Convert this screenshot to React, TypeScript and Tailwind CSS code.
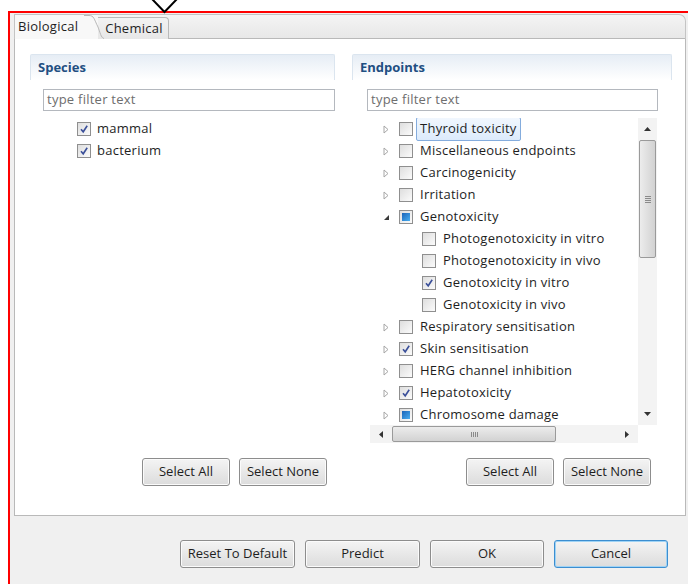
import React from 'react'

type Node = {
  label: string
  state: 'on' | 'off' | 'mixed'
  expander?: 'closed' | 'open'
  child?: boolean
  selected?: boolean
}

const endpoints: Node[] = [
  { label: 'Thyroid toxicity', state: 'off', expander: 'closed', selected: true },
  { label: 'Miscellaneous endpoints', state: 'off', expander: 'closed' },
  { label: 'Carcinogenicity', state: 'off', expander: 'closed' },
  { label: 'Irritation', state: 'off', expander: 'closed' },
  { label: 'Genotoxicity', state: 'mixed', expander: 'open' },
  { label: 'Photogenotoxicity in vitro', state: 'off', child: true },
  { label: 'Photogenotoxicity in vivo', state: 'off', child: true },
  { label: 'Genotoxicity in vitro', state: 'on', child: true },
  { label: 'Genotoxicity in vivo', state: 'off', child: true },
  { label: 'Respiratory sensitisation', state: 'off', expander: 'closed' },
  { label: 'Skin sensitisation', state: 'on', expander: 'closed' },
  { label: 'HERG channel inhibition', state: 'off', expander: 'closed' },
  { label: 'Hepatotoxicity', state: 'on', expander: 'closed' },
  { label: 'Chromosome damage', state: 'mixed', expander: 'closed' },
]

const font = 'font-["Open_Sans","Noto_Sans",sans-serif]'
const label = 'text-[13px] tracking-[0.25px]'

function Check({ state }: { state: Node['state'] }) {
  return (
    <span className="flex h-[14px] w-[14px] shrink-0 items-center justify-center border border-[#8f8f8f] bg-gradient-to-br from-[#dedede] to-[#fbfbfb]">
      {state === 'on' && (
        <svg width="10" height="10" viewBox="0 0 10 10">
          <path d="M2 5.2 L4.2 7.8 L8.2 1.8" fill="none" stroke="#3a4f99" strokeWidth="1.6" />
        </svg>
      )}
      {state === 'mixed' && <span className="h-[8px] w-[8px] bg-gradient-to-br from-[#1b64b8] to-[#4aaef0]" />}
    </span>
  )
}

function Expander({ kind }: { kind?: Node['expander'] }) {
  if (kind === 'open')
    return (
      <svg width="7" height="7" viewBox="0 0 7 7">
        <path d="M6 1 L6 6 L1 6 Z" fill="#3a3a3a" />
      </svg>
    )
  if (kind === 'closed')
    return (
      <svg width="6" height="9" viewBox="0 0 6 9">
        <path d="M1 1 L5 4.5 L1 8 Z" fill="none" stroke="#a6a6a6" strokeWidth="1" />
      </svg>
    )
  return null
}

function Button({ text, w, focus }: { text: string; w: string; focus?: boolean }) {
  return (
    <button
      className={`flex h-[28px] ${w} items-center justify-center rounded-[3px] border bg-gradient-to-b from-[#f4f4f4] to-[#dcdcdc] text-[13px] text-[#1e1e1e] ${
        focus ? 'border-[#3c8ed0] shadow-[inset_0_0_0_1px_#9fd3f5]' : 'border-[#8d8d8d] shadow-[inset_0_0_0_1px_#fbfbfb]'
      }`}
    >
      {text}
    </button>
  )
}

function Header({ title }: { title: string }) {
  return (
    <div className="flex h-[26px] items-center rounded-t-[2px] border border-b-0 border-[#dbe5ef] bg-gradient-to-b from-[#e6edf5] to-white pl-[7px] text-[13px] font-bold text-[#1f4f82]">
      {title}
    </div>
  )
}

function Filter({ w, ml }: { w: string; ml: string }) {
  return (
    <div className={`mt-[9px] ${ml} flex h-[22px] ${w} items-center border border-[#b4b8be] bg-white pl-[3px] ${label} text-[#6e6e6e]`}>
      type filter text
    </div>
  )
}

function VScroll() {
  return (
    <div className="flex w-[19px] flex-col items-center bg-[#f3f3f3]">
      <div className="flex h-[22px] items-center">
        <svg width="7" height="4" viewBox="0 0 7 4"><path d="M0 4 L3.5 0 L7 4 Z" fill="#333" /></svg>
      </div>
      <div className="flex h-[118px] w-[17px] items-center justify-center rounded-[2px] border border-[#9a9a9a] bg-gradient-to-r from-[#ececec] to-[#d2d2d2]">
        <div className="flex flex-col gap-[1px]">
          <span className="h-[1px] w-[6px] bg-[#8a8a8a]" />
          <span className="h-[1px] w-[6px] bg-[#8a8a8a]" />
          <span className="h-[1px] w-[6px] bg-[#8a8a8a]" />
          <span className="h-[1px] w-[6px] bg-[#8a8a8a]" />
        </div>
      </div>
      <div className="flex-1" />
      <div className="flex h-[22px] items-center">
        <svg width="7" height="4" viewBox="0 0 7 4"><path d="M0 0 L7 0 L3.5 4 Z" fill="#333" /></svg>
      </div>
    </div>
  )
}

function HScroll() {
  return (
    <div className="flex h-[18px]">
      <div className="flex flex-1 items-center bg-[#f3f3f3]">
        <div className="flex w-[22px] justify-center">
          <svg width="4" height="7" viewBox="0 0 4 7"><path d="M4 0 L0 3.5 L4 7 Z" fill="#333" /></svg>
        </div>
        <div className="flex h-[16px] w-[164px] items-center justify-center rounded-[2px] border border-[#9a9a9a] bg-gradient-to-b from-[#ececec] to-[#d2d2d2]">
          <div className="flex gap-[1px]">
            <span className="h-[5px] w-[1px] bg-[#8a8a8a]" />
            <span className="h-[5px] w-[1px] bg-[#8a8a8a]" />
            <span className="h-[5px] w-[1px] bg-[#8a8a8a]" />
            <span className="h-[5px] w-[1px] bg-[#8a8a8a]" />
          </div>
        </div>
        <div className="flex-1" />
        <div className="flex w-[22px] justify-center">
          <svg width="4" height="7" viewBox="0 0 4 7"><path d="M0 0 L4 3.5 L0 7 Z" fill="#333" /></svg>
        </div>
      </div>
      <div className="w-[19px] bg-white" />
    </div>
  )
}

function Tree() {
  return (
    <div className="ml-[18px] mt-[7px] flex h-[325px] w-[287px] flex-col">
      <div className="flex min-h-0 flex-1">
        <div className="flex-1 overflow-hidden">
          {endpoints.map((n) => (
            <div key={n.label} className={`flex h-[22px] items-center ${n.child ? 'pl-[52px]' : 'pl-[13px]'}`}>
              {!n.child && (
                <span className="flex w-[16px] items-center justify-start">
                  <Expander kind={n.expander} />
                </span>
              )}
              <Check state={n.state} />
              <span
                className={`ml-[3px] whitespace-nowrap px-[3px] py-[1px] ${label} text-[#1e1e1e] ${
                  n.selected ? 'rounded-[2px] border border-[#84acdd] bg-gradient-to-b from-[#f1f7fe] to-[#dcebfc]' : 'border border-transparent'
                }`}
              >
                {n.label}
              </span>
            </div>
          ))}
        </div>
        <VScroll />
      </div>
      <HScroll />
    </div>
  )
}

export default function App() {
  return (
    <div className={`relative h-[584px] w-[688px] overflow-hidden bg-white ${font}`}>
      {/* drop-down pointer above the frame */}
      <svg className="absolute left-[151px] top-0" width="27" height="14" viewBox="0 0 27 14">
        <path d="M1 -1 L13.5 12 L26 -1" fill="none" stroke="#000" strokeWidth="2" />
      </svg>

      <div className="ml-[8px] mt-[11px] flex h-[573px] flex-col border-l-2 border-t-2 border-[#ff0000] bg-[#f0f0f0] pl-[4px] pr-[2px] pt-[1px]">
        {/* tab strip */}
        <div className="flex h-[25px] items-end rounded-tr-[7px] border border-b-0 border-[#c4c4c4] bg-gradient-to-b from-[#f4f4f4] to-[#e7e7e7]">
          <div className={`relative flex h-[24px] items-center bg-[#f8f8f8] pl-[3px] pr-[20px] ${label} text-[#1e1e1e]`}>
            Biological
            <svg className="absolute right-[-6px] top-0" width="20" height="24" viewBox="0 0 20 24">
              <path d="M0 0.5 L5 0.5 C10 0.5 10 4 14 12 C16 17 17 23 20 23.5" fill="none" stroke="#b9b9b9" strokeWidth="1" />
            </svg>
          </div>
          <div className={`flex h-[22px] items-center rounded-tr-[4px] border-r border-t border-[#b9b9b9] pl-[7px] pr-[5px] ${label} text-[#1e1e1e]`}>
            Chemical
          </div>
          <div className="h-full flex-1 border-b border-[#b9b9b9]" />
        </div>

        {/* tab body */}
        <div className="flex h-[477px] border border-t-0 border-[#b9b9b9] bg-white pt-[15px]">
          <div className="ml-[15px] flex w-[305px] flex-col">
            <Header title="Species" />
            <Filter w="w-[292px]" ml="ml-[13px]" />
            <div className="mt-[7px] flex flex-col">
              {['mammal', 'bacterium'].map((s) => (
                <div key={s} className="flex h-[22px] items-center pl-[47px]">
                  <Check state="on" />
                  <span className={`ml-[6px] ${label} text-[#1e1e1e]`}>{s}</span>
                </div>
              ))}
            </div>
            <div className="flex-1" />
            <div className="mb-[29px] flex justify-end gap-[9px] pr-[8px]">
              <Button text="Select All" w="w-[88px]" />
              <Button text="Select None" w="w-[88px]" />
            </div>
          </div>

          <div className="ml-[17px] flex w-[320px] flex-col">
            <Header title="Endpoints" />
            <Filter w="w-[291px]" ml="ml-[15px]" />
            <Tree />
            <div className="flex-1" />
            <div className="mb-[29px] flex justify-end gap-[9px] pr-[21px]">
              <Button text="Select All" w="w-[88px]" />
              <Button text="Select None" w="w-[88px]" />
            </div>
          </div>
        </div>

        {/* dialog buttons */}
        <div className="mt-[24px] flex gap-[10px] pl-[166px]">
          <Button text="Reset To Default" w="w-[115px]" />
          <Button text="Predict" w="w-[115px]" />
          <Button text="OK" w="w-[114px]" />
          <Button text="Cancel" w="w-[114px]" focus />
        </div>
      </div>
    </div>
  )
}
